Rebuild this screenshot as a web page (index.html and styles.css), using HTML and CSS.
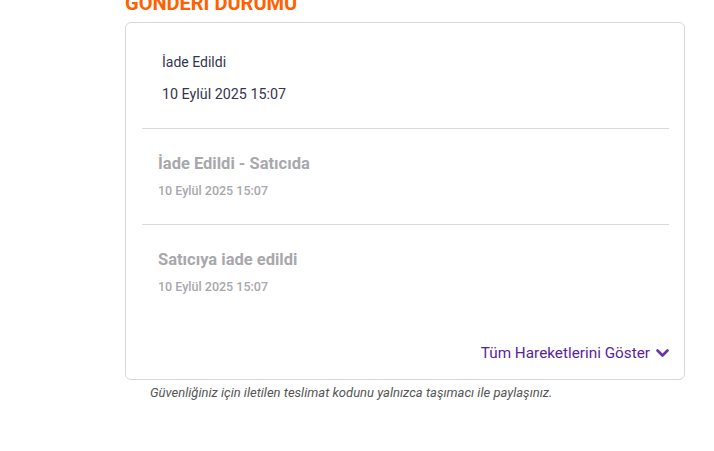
FILE: index.html
```html
<!DOCTYPE html>
<html lang="tr">
<head>
  <meta charset="UTF-8" />
  <meta name="viewport" content="width=device-width, initial-scale=1.0"/>
  <title>Gönderi Durumu</title>
  <link rel="stylesheet" href="styles.css">
</head>
<body>

<div class="shipment">
  <h2 class="shipment-title">GÖNDERİ DURUMU</h2>

  <div class="status-card">
    <div class="status-item current">
      <div class="status-name">İade Edildi</div>
      <div class="status-date">10 Eylül 2025 15:07</div>
    </div>
    <div class="status-item">
      <div class="status-name">İade Edildi - Satıcıda</div>
      <div class="status-date">10 Eylül 2025 15:07</div>
    </div>
    <div class="status-item">
      <div class="status-name">Satıcıya iade edildi</div>
      <div class="status-date">10 Eylül 2025 15:07</div>
    </div>

    <div class="show-all">
      <span>Tüm Hareketlerini Göster</span>
      <svg width="13" height="9" viewBox="0 0 13 9"><path d="M1.5 1.5 L6.5 6.5 L11.5 1.5" fill="none" stroke="#6b2fb3" stroke-width="2.6" stroke-linecap="round" stroke-linejoin="round"/></svg>
    </div>
  </div>

  <p class="safety-note">Güvenliğiniz için iletilen teslimat kodunu yalnızca taşımacı ile paylaşınız.</p>
</div>

</body>
</html>
```

FILE: styles.css
```css
* { box-sizing: border-box; margin: 0; padding: 0; }
body {
  font-family: Roboto, "Liberation Sans", sans-serif;
  background: #fff;
  color: #333;
}

.shipment {
  width: 560px;
  margin-left: 125px;
  margin-top: -8px;
}

.shipment-title {
  font-size: 20px;
  line-height: 22px;
  font-weight: 700;
  color: #ff6000;
  margin-bottom: 8px;
}

.status-card {
  border: 1px solid #d8d8d8;
  border-radius: 6px;
  padding: 0 15px 16px 16px;
}

.status-item {
  padding: 23px 16px 24px;
  border-top: 1px solid #d9d9d9;
}
.status-item.current {
  border-top: none;
  padding: 29px 20px 24px;
}

.status-name {
  font-size: 16.5px;
  line-height: 24px;
  font-weight: 700;
  color: #a8a8ac;
}
.status-date {
  font-size: 12.5px;
  line-height: 18px;
  font-weight: 500;
  color: #a8a8ac;
  margin-top: 6px;
}

.current .status-name,
.current .status-date {
  font-size: 14px;
  line-height: 20px;
  font-weight: 400;
  color: #35354d;
}
.current .status-date {
  font-size: 14.3px;
  margin-top: 12px;
}

.show-all {
  display: flex;
  justify-content: flex-end;
  align-items: center;
  gap: 6px;
  margin-top: 23px;
  font-size: 15.3px;
  line-height: 20px;
  color: #5a1f9a;
  cursor: pointer;
}

.safety-note {
  font-size: 13px;
  line-height: 16px;
  font-style: italic;
  color: #555;
  margin-top: 5px;
  padding-left: 25px;
}
```
